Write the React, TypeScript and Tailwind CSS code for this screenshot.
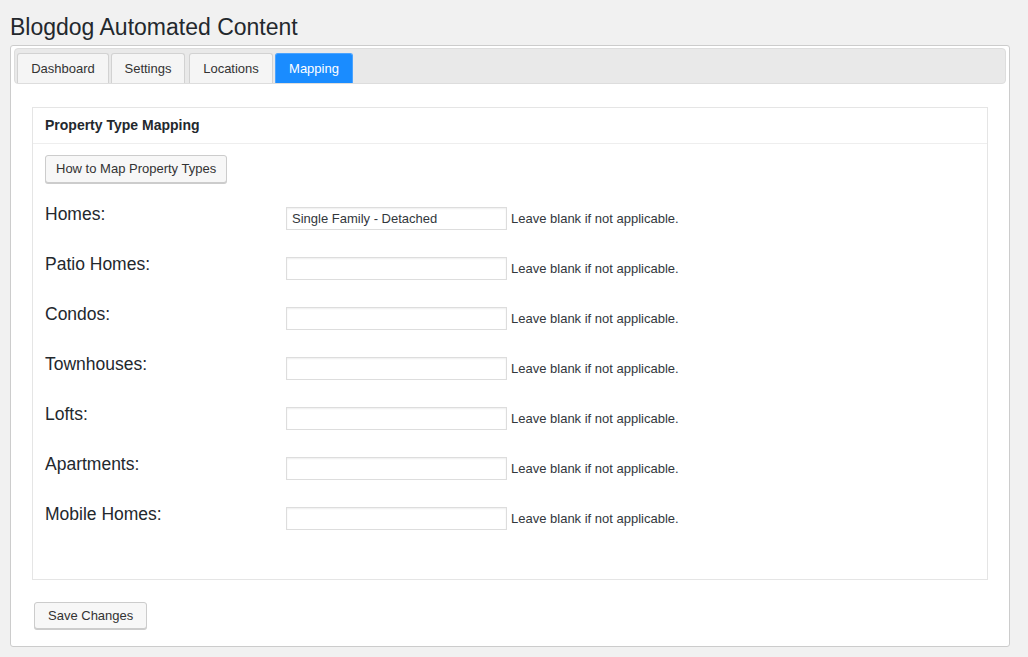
import React from "react";

const tabs = [
    { name: "Dashboard", w: "w-[92px]", ml: "ml-0" },
    { name: "Settings", w: "w-[74px]", ml: "ml-[2px]" },
    { name: "Locations", w: "w-[84px]", ml: "ml-[4px]" },
    { name: "Mapping", w: "w-[78px]", ml: "ml-[2px]" },
];

const rows: { label: string; value?: string }[] = [
    { label: "Homes:", value: "Single Family - Detached" },
    { label: "Patio Homes:" },
    { label: "Condos:" },
    { label: "Townhouses:" },
    { label: "Lofts:" },
    { label: "Apartments:" },
    { label: "Mobile Homes:" },
];

export default function App() {
    return (
        <div className="min-h-screen bg-[#f1f1f1] pl-[10px] font-['Liberation_Sans',Arial,sans-serif] text-[#23282d]">
            <h1 className="pt-[12px] mb-[3px] text-[23px] leading-[30px] font-normal">Blogdog Automated Content</h1>

            <div className="w-[1000px] h-[602px] bg-white border border-[#ccc] rounded-[3px] pt-[2px] px-[3px]">
                {/* tab strip */}
                <div className="h-[36px] bg-[#e9e9e9] border border-[#ddd] rounded-[4px] flex items-end pl-[2px]">
                    {tabs.map((t) => (
                        <div
                            key={t.name}
                            className={
                                t.name === "Mapping"
                                    ? `${t.w} ${t.ml} h-[30px] flex items-center justify-center text-[13px] rounded-t-[3px] border border-b-0 border-[#4aa3ff] bg-[#1a8cff] text-white`
                                    : `${t.w} ${t.ml} h-[30px] flex items-center justify-center text-[13px] rounded-t-[3px] border border-b-0 border-[#d2d2d2] bg-[#f5f5f5] text-[#333]`
                            }
                        >
                            {t.name}
                        </div>
                    ))}
                </div>

                <div className="px-[18px] pt-[23px]">
                    <div className="border border-[#e5e5e5]">
                        <div className="h-[36px] flex items-center px-[12px] border-b border-[#eee] text-[14px] font-bold">
                            Property Type Mapping
                        </div>
                        <div className="px-[12px] pt-[11px] pb-[28px]">
                            <button className="h-[28px] px-[10px] text-[13px] text-[#333] bg-[#f7f7f7] border border-[#ccc] rounded-[3px] shadow-[0_1px_0_#ccc]">
                                How to Map Property Types
                            </button>
                            <div className="mt-[18px]">
                                {rows.map((r) => (
                                    <div key={r.label} className="flex h-[50px]">
                                        <div className="w-[241px] pt-[1px] text-[17.5px] leading-[24px]">{r.label}</div>
                                        <div className="flex items-center h-[23px] mt-[6px]">
                                            <input
                                                type="text"
                                                defaultValue={r.value ?? ""}
                                                className="w-[221px] h-[23px] px-[5px] text-[13px] text-[#32373c] bg-white border border-[#ddd] shadow-[inset_0_1px_2px_rgba(0,0,0,0.07)] outline-none"
                                            />
                                            <span className="ml-[4px] text-[13px] text-[#32373c]">Leave blank if not applicable.</span>
                                        </div>
                                    </div>
                                ))}
                            </div>
                        </div>
                    </div>

                    <button className="mt-[22px] ml-[2px] h-[27px] px-[13px] text-[13px] text-[#333] bg-[#f7f7f7] border border-[#ccc] rounded-[3px] shadow-[0_1px_0_#ccc]">
                        Save Changes
                    </button>
                </div>
            </div>
        </div>
    );
}
